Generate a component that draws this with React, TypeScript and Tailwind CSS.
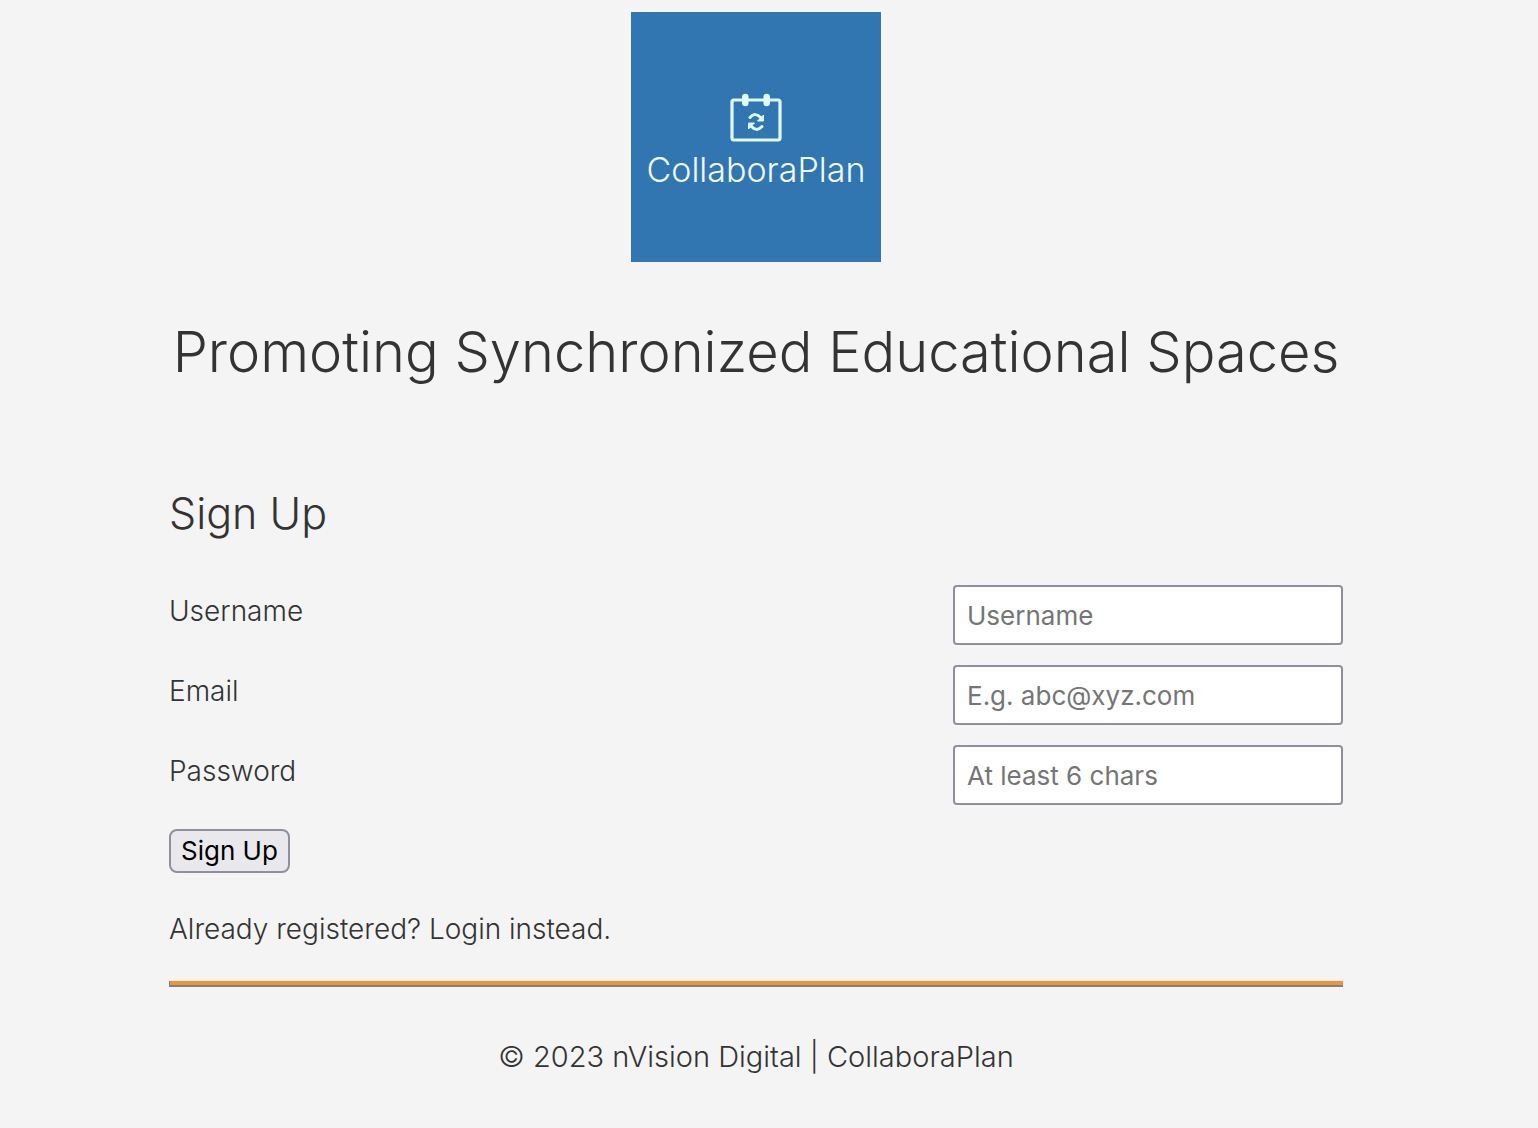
import React from "react";

const fields = [
  { id: "username", label: "Username", type: "text", placeholder: "Username" },
  { id: "email", label: "Email", type: "email", placeholder: "E.g. abc@xyz.com" },
  { id: "password", label: "Password", type: "password", placeholder: "At least 6 chars" },
];

function Logo() {
  return (
    <div className="mx-auto flex size-[250px] flex-col items-center bg-[#3175b1] pt-20 text-[#e0fbff]">
      <svg viewBox="0 0 56 52" className="h-[52px] w-14" fill="none" stroke="currentColor" aria-hidden="true">
        <rect x="4" y="8" width="48" height="40" rx="2" strokeWidth="3.2" />
        <path d="M17.3 5v6M38.7 5v6" strokeWidth="6.5" strokeLinecap="round" />
        <path d="M22 25.5q5.500-6 11 .5M34 34.500q-5.500 6-11-.5" strokeWidth="3" strokeLinecap="round" />
        <path d="M35.500 23v6h-6zM20.500 37v-6h6z" fill="currentColor" strokeWidth="1" strokeLinejoin="round" />
      </svg>
      <span className="mt-1.5 font-['Inter',sans-serif] text-[34px] leading-10 font-light text-[#f0fdff]">CollaboraPlan</span>
    </div>
  );
}

export default function App() {
  return (
    <div className="min-h-screen bg-[#f4f4f4] pt-3 pr-[195px] pb-12 pl-[169px] font-['Inter',sans-serif] text-[28px] font-light text-[#333]">
      <header>
        <Logo />
        <h1 className="mt-12 text-center text-[56px] leading-[84px]">
          Promoting Synchronized Educational Spaces
        </h1>
      </header>
      <main>
        <h2 className="mt-[87px] text-[43px] leading-[64px]">Sign Up</h2>
        <form className="mt-10" onSubmit={(e) => e.preventDefault()}>
          {fields.map((f) => (
            <div key={f.id} className="mb-5 flex items-start justify-between">
              <label htmlFor={f.id} className="pt-1 leading-[44px]">{f.label}</label>
              <input
                id={f.id}
                type={f.type}
                placeholder={f.placeholder}
                className="h-[60px] w-[390px] rounded-[4px] border-2 border-[#8f8f9d] bg-white px-3 text-[26px] font-normal placeholder:text-[#757575]"
              />
            </div>
          ))}
          <button className="mt-6 block h-11 rounded-lg border-2 border-[#8f8f9d] bg-[#e9e9ed] px-2.5 text-[26px] leading-10 font-normal text-black">
            Sign Up
          </button>
        </form>
        <p className="mt-[34px] leading-[44px]">
          Already registered? <a href="#login">Login instead.</a>
        </p>
        <hr className="mt-[30px] h-1.5 border-0 border-b-2 border-l border-[#808080] bg-[#f09235]" />
      </main>
      <footer className="mt-12 text-center text-[29px] leading-[44px]">© 2023 nVision Digital | CollaboraPlan</footer>
    </div>
  );
}
